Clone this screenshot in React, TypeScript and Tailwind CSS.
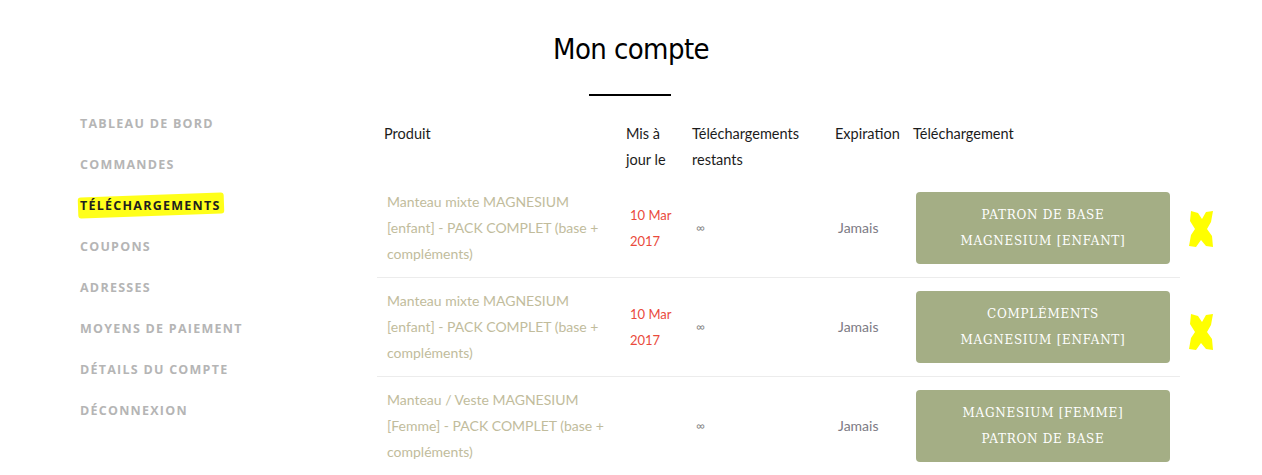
import React from "react";

const navItems = [
  "Tableau de bord",
  "Commandes",
  "Téléchargements",
  "Coupons",
  "Adresses",
  "Moyens de paiement",
  "Détails du compte",
  "Déconnexion",
];

type Row = {
  product: string[];
  date?: string[];
  button: string[];
};

const rows: Row[] = [
  {
    product: ["Manteau mixte MAGNESIUM", "[enfant] - PACK COMPLET (base +", "compléments)"],
    date: ["10 Mar", "2017"],
    button: ["Patron de base", "Magnesium [enfant]"],
  },
  {
    product: ["Manteau mixte MAGNESIUM", "[enfant] - PACK COMPLET (base +", "compléments)"],
    date: ["10 Mar", "2017"],
    button: ["Compléments", "Magnesium [enfant]"],
  },
  {
    product: ["Manteau / Veste MAGNESIUM", "[Femme] - PACK COMPLET (base +", "compléments)"],
    button: ["Magnesium [femme]", "Patron de base"],
  },
];

function Lines({ lines }: { lines: string[] }) {
  return (
    <>
      {lines.map((l, i) => (
        <span key={i} className="block whitespace-nowrap">
          {l}
        </span>
      ))}
    </>
  );
}

function Mark({ top }: { top: number }) {
  return (
    <svg
      className="absolute left-[811px]"
      style={{ top }}
      width="26"
      height="38"
      viewBox="0 0 26 38"
    >
      <path
        d="M3 1 L10 3 L14 9 L18 2 L25 1 L23 12 L19 19 L24 26 L25 37 L18 36 L13 30 L8 37 L1 36 L3 25 L7 19 L2 11 Z"
        fill="#ffff00"
      />
    </svg>
  );
}

export default function App() {
  return (
    <div className="min-h-[475px] bg-white font-['Lato',sans-serif]">
      <h1 className="pt-[29px] text-center font-['DejaVu_Sans_Condensed','DejaVu_Sans',sans-serif] text-[29px] leading-[40px] tracking-[-0.02em] text-black">
        Mon compte
      </h1>
      <div className="mx-auto mt-[25px] h-[2px] w-[82px] -translate-x-[1px] bg-black" />

      <div className="flex pl-[80px] pt-[16px]">
        <nav className="w-[297px] shrink-0">
          <ul className="-mt-[1px] flex flex-col">
            {navItems.map((item) => {
              const active = item === "Téléchargements";
              return (
                <li
                  key={item}
                  className={`relative h-[41px] text-[12.5px] font-bold uppercase leading-[26px] tracking-[0.1em] font-['Open_Sans',sans-serif] ${active ? "text-[#1e1e1e]" : "text-[#b5b5b5]"}`}
                >
                  {active && (
                    <span className="absolute left-[-2px] top-[2px] h-[21px] w-[146px] -rotate-2 rounded-[3px] bg-[#ffff1a]" />
                  )}
                  <span className="relative">{item}</span>
                </li>
              );
            })}
          </ul>
        </nav>

        <div className="relative mt-[6px] w-[803px]">
          <table className="w-full table-fixed border-collapse text-[14px] leading-[26px]">
            <colgroup>
              <col className="w-[242px]" />
              <col className="w-[66px]" />
              <col className="w-[143px]" />
              <col className="w-[78px]" />
              <col />
            </colgroup>
            <thead>
              <tr className="text-left align-top text-[14.5px] text-[#1c1c1c]">
                <th className="pb-[6px] pt-[3px] pl-[7px] font-normal">Produit</th>
                <th className="pb-[6px] pt-[3px] pl-[7px] font-normal">
                  <Lines lines={["Mis à", "jour le"]} />
                </th>
                <th className="pb-[6px] pt-[3px] pl-[7px] font-normal">
                  <Lines lines={["Téléchargements", "restants"]} />
                </th>
                <th className="pb-[6px] pt-[3px] pl-[7px] font-normal">Expiration</th>
                <th className="pb-[6px] pt-[3px] pl-[7px] font-normal">Téléchargement</th>
              </tr>
            </thead>
            <tbody>
              {rows.map((r, i) => (
                <tr key={i} className="border-b border-[#ececec] align-middle">
                  <td className="py-[10px] pl-[10px] text-[#c1bc9c]">
                    <Lines lines={r.product} />
                  </td>
                  <td className="pl-[11px] text-[13px] text-[#ea4a3c]">
                    {r.date && <Lines lines={r.date} />}
                  </td>
                  <td className="pl-[11px] text-[12px] text-[#8a8a8a]">∞</td>
                  <td className="pl-[10px] text-[#7c7a84]">Jamais</td>
                  <td className="py-[10px] pl-[10px] pr-[10px]">
                    <div className="rounded-[4px] bg-[#a4ae85] py-[10px] text-center font-['DejaVu_Serif',serif] text-[12px] uppercase leading-[26px] tracking-[0.06em] text-white">
                      <Lines lines={r.button} />
                    </div>
                  </td>
                </tr>
              ))}
            </tbody>
          </table>
          <Mark top={92} />
          <Mark top={195} />
        </div>
      </div>
    </div>
  );
}
